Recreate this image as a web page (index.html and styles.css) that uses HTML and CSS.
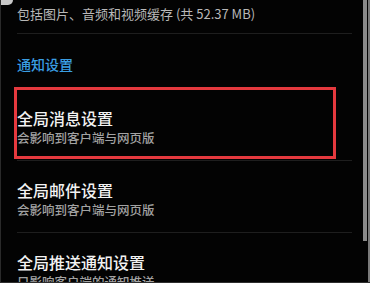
FILE: index.html
```html
<!DOCTYPE html>
<html lang="zh-CN">
<head>
<meta charset="utf-8">
<title>通知设置</title>
<link rel="stylesheet" href="styles.css">
</head>
<body>
<div class="frame">
  <div class="corner"></div>
  <div class="content">
    <div class="cache">包括图片、音频和视频缓存 (共 52.37 MB)</div>
    <div class="section-title">通知设置</div>
    <div class="item">
      <div class="title">全局消息设置</div>
      <div class="sub">会影响到客户端与网页版</div>
      <div class="highlight"></div>
    </div>
    <div class="item">
      <div class="title">全局邮件设置</div>
      <div class="sub">会影响到客户端与网页版</div>
    </div>
    <div class="item">
      <div class="title">全局推送通知设置</div>
      <div class="sub">只影响客户端的通知推送</div>
    </div>
  </div>
  <div class="scroll">
    <div class="thumb"></div>
  </div>
  <div class="edge"></div>
</div>
</body>
</html>
```
FILE: styles.css
```css
html, body {
  margin: 0;
  padding: 0;
  background: #000;
}
body {
  font-family: "Noto Sans CJK SC", "Noto Sans", sans-serif;
}
.frame {
  position: relative;
  width: 370px;
  height: 283px;
  overflow: hidden;
  display: flex;
  background: #030303;
  border-left: 1px solid #2a2a2a;
  border-bottom: 1px solid #2e2e2e;
  box-sizing: border-box;
}
.corner {
  position: absolute;
  left: -1px;
  top: 0;
  width: 13px;
  height: 5px;
  background: #c8c8c8;
  border-bottom-right-radius: 6px;
}
.content {
  flex: 1;
  padding: 0 11px 0 16px;
}
.cache {
  height: 33px;
  line-height: 27px;
  font-size: 13px;
  color: #b8b8b8;
  border-bottom: 1px solid #1e1e1e;
  white-space: nowrap;
}
.section-title {
  height: 55px;
  line-height: 60px;
  font-size: 14px;
  color: #3a9ee2;
  font-weight: 500;
}
.item {
  position: relative;
  height: 72px;
  padding-top: 19px;
  box-sizing: border-box;
  border-bottom: 1px solid #1e1e1e;
}
.title {
  font-size: 16px;
  line-height: 21px;
  color: #f2f2f2;
  font-weight: 500;
  white-space: nowrap;
}
.sub {
  font-size: 12.5px;
  line-height: 18px;
  color: #a2a2a2;
  font-weight: 500;
  white-space: nowrap;
}
.highlight {
  position: absolute;
  left: -3px;
  top: -2px;
  width: 322px;
  height: 72px;
  border: 3px solid #e5393e;
  box-sizing: border-box;
}
.scroll {
  width: 5px;
}
.thumb {
  width: 4px;
  height: 241px;
  background: #8a8a8a;
}
.edge {
  width: 2px;
  background: #7a7a7a;
}
```
